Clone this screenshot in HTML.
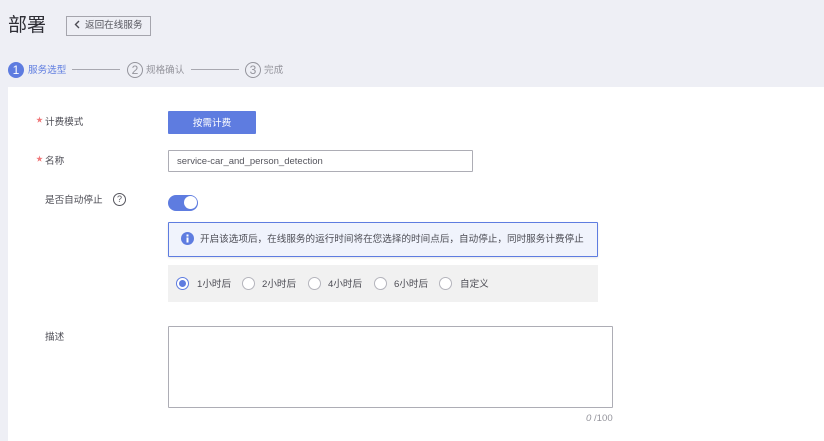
<!DOCTYPE html>
<html lang="zh"><head><meta charset="utf-8">
<style>
html,body{margin:0;padding:0}
body{width:824px;height:441px;overflow:hidden;background:#eeeff5;position:relative;font-family:"Liberation Sans","Noto Sans CJK SC",sans-serif;font-size:9.6px;color:#4c4c54}
.a{position:absolute;white-space:nowrap;line-height:14px}
.r{position:absolute;width:11px;height:11px;border:1px solid #b4b4bc;border-radius:50%;background:#fff}
.star{color:#f0787a;font-size:7px}
</style></head><body>
<div class="a" style="left:8px;top:13px;font-size:19px;line-height:26px;color:#2f2f36">部署</div>
<div class="a" style="left:66px;top:16px;width:83px;height:18px;border:1px solid #a5a5ad;line-height:18px;color:#55555d"><svg style="position:absolute;left:7px;top:3px" width="7" height="10"><path d="M5 1L1.5 4.5L5 8" fill="none" stroke="#4c4c54" stroke-width="1.4"/></svg><span style="position:absolute;left:18px;top:0">返回在线服务</span></div>

<div class="a" style="left:8px;top:62px;width:16px;height:16px;border-radius:50%;background:#5e7ce0;color:#fff;text-align:center;line-height:16px;font-size:12px">1</div>
<div class="a" style="left:28px;top:64px;color:#5e7ce0">服务选型</div>
<div class="a" style="left:72px;top:69px;width:48px;height:1px;background:#a8a8b0"></div>
<div class="a" style="left:127px;top:62px;width:14px;height:14px;border:1px solid #94949c;border-radius:50%;color:#94949c;text-align:center;line-height:14px;font-size:12px">2</div>
<div class="a" style="left:146px;top:64px;color:#94949c">规格确认</div>
<div class="a" style="left:191px;top:69px;width:48px;height:1px;background:#a8a8b0"></div>
<div class="a" style="left:245px;top:62px;width:14px;height:14px;border:1px solid #94949c;border-radius:50%;color:#94949c;text-align:center;line-height:14px;font-size:12px">3</div>
<div class="a" style="left:264px;top:64px;color:#94949c">完成</div>

<div style="position:absolute;left:8px;top:87px;width:816px;height:354px;background:#fff"></div>

<div class="a star" style="left:36px;top:114px">★</div>
<div class="a" style="left:45px;top:116px">计费模式</div>
<div class="a" style="left:168px;top:111px;width:88px;height:23px;background:#5e7ce0;border-radius:1px;color:#fff;text-align:center;line-height:25px">按需计费</div>

<div class="a star" style="left:36px;top:153px">★</div>
<div class="a" style="left:45px;top:155px">名称</div>
<div class="a" style="left:168px;top:150px;width:303px;height:20px;border:1px solid #adadb5;border-radius:1px;line-height:20px;background:#fff"><span style="position:absolute;left:8px;top:1px;color:#55555d;font-size:9.5px">service-car_and_person_detection</span></div>

<div class="a" style="left:45px;top:194px">是否自动停止</div>
<div class="a" style="left:113px;top:193px;width:11px;height:11px;border:1px solid #55555d;border-radius:50%;text-align:center;line-height:11px;font-size:9px;color:#55555d">?</div>
<div class="a" style="left:168px;top:195px;width:30px;height:16px;background:#5e7ce0;border-radius:8px"></div>
<div class="a" style="left:184px;top:196px;width:13px;height:13px;background:#fff;border-radius:50%;border:0"></div>

<div class="a" style="left:168px;top:222px;width:428px;height:33px;border:1px solid #5e7ce0;border-radius:1px;background:#f0f3fc;box-shadow:0 1px 2px rgba(0,0,0,.1)"></div>
<svg style="position:absolute;left:181px;top:232px" width="13" height="13"><circle cx="6.5" cy="6.5" r="6.5" fill="#5e7ce0"/><rect x="5.5" y="5.5" width="2" height="5" fill="#fff"/><rect x="5.5" y="2.5" width="2" height="2" fill="#fff"/></svg>
<div class="a" style="left:200px;top:233px">开启该选项后，在线服务的运行时间将在您选择的时间点后，自动停止，同时服务计费停止</div>

<div style="position:absolute;left:168px;top:265px;width:430px;height:37px;background:#f1f1f1"></div>
<div class="r" style="left:176px;top:277px;border-color:#5e7ce0"></div>
<div style="position:absolute;left:179px;top:280px;width:7px;height:7px;border-radius:50%;background:#5e7ce0"></div>
<div class="a" style="left:197px;top:278px">1小时后</div>
<div class="r" style="left:242px;top:277px"></div>
<div class="a" style="left:262px;top:278px">2小时后</div>
<div class="r" style="left:308px;top:277px"></div>
<div class="a" style="left:328px;top:278px">4小时后</div>
<div class="r" style="left:374px;top:277px"></div>
<div class="a" style="left:394px;top:278px">6小时后</div>
<div class="r" style="left:439px;top:277px"></div>
<div class="a" style="left:460px;top:278px">自定义</div>

<div class="a" style="left:45px;top:331px">描述</div>
<div style="position:absolute;left:168px;top:326px;width:443px;height:80px;border:1px solid #adadb5;border-radius:1px;background:#fff"></div>
<div class="a" style="left:586px;top:412px;color:#94949c"><i>0</i> /100</div>
</body></html>
